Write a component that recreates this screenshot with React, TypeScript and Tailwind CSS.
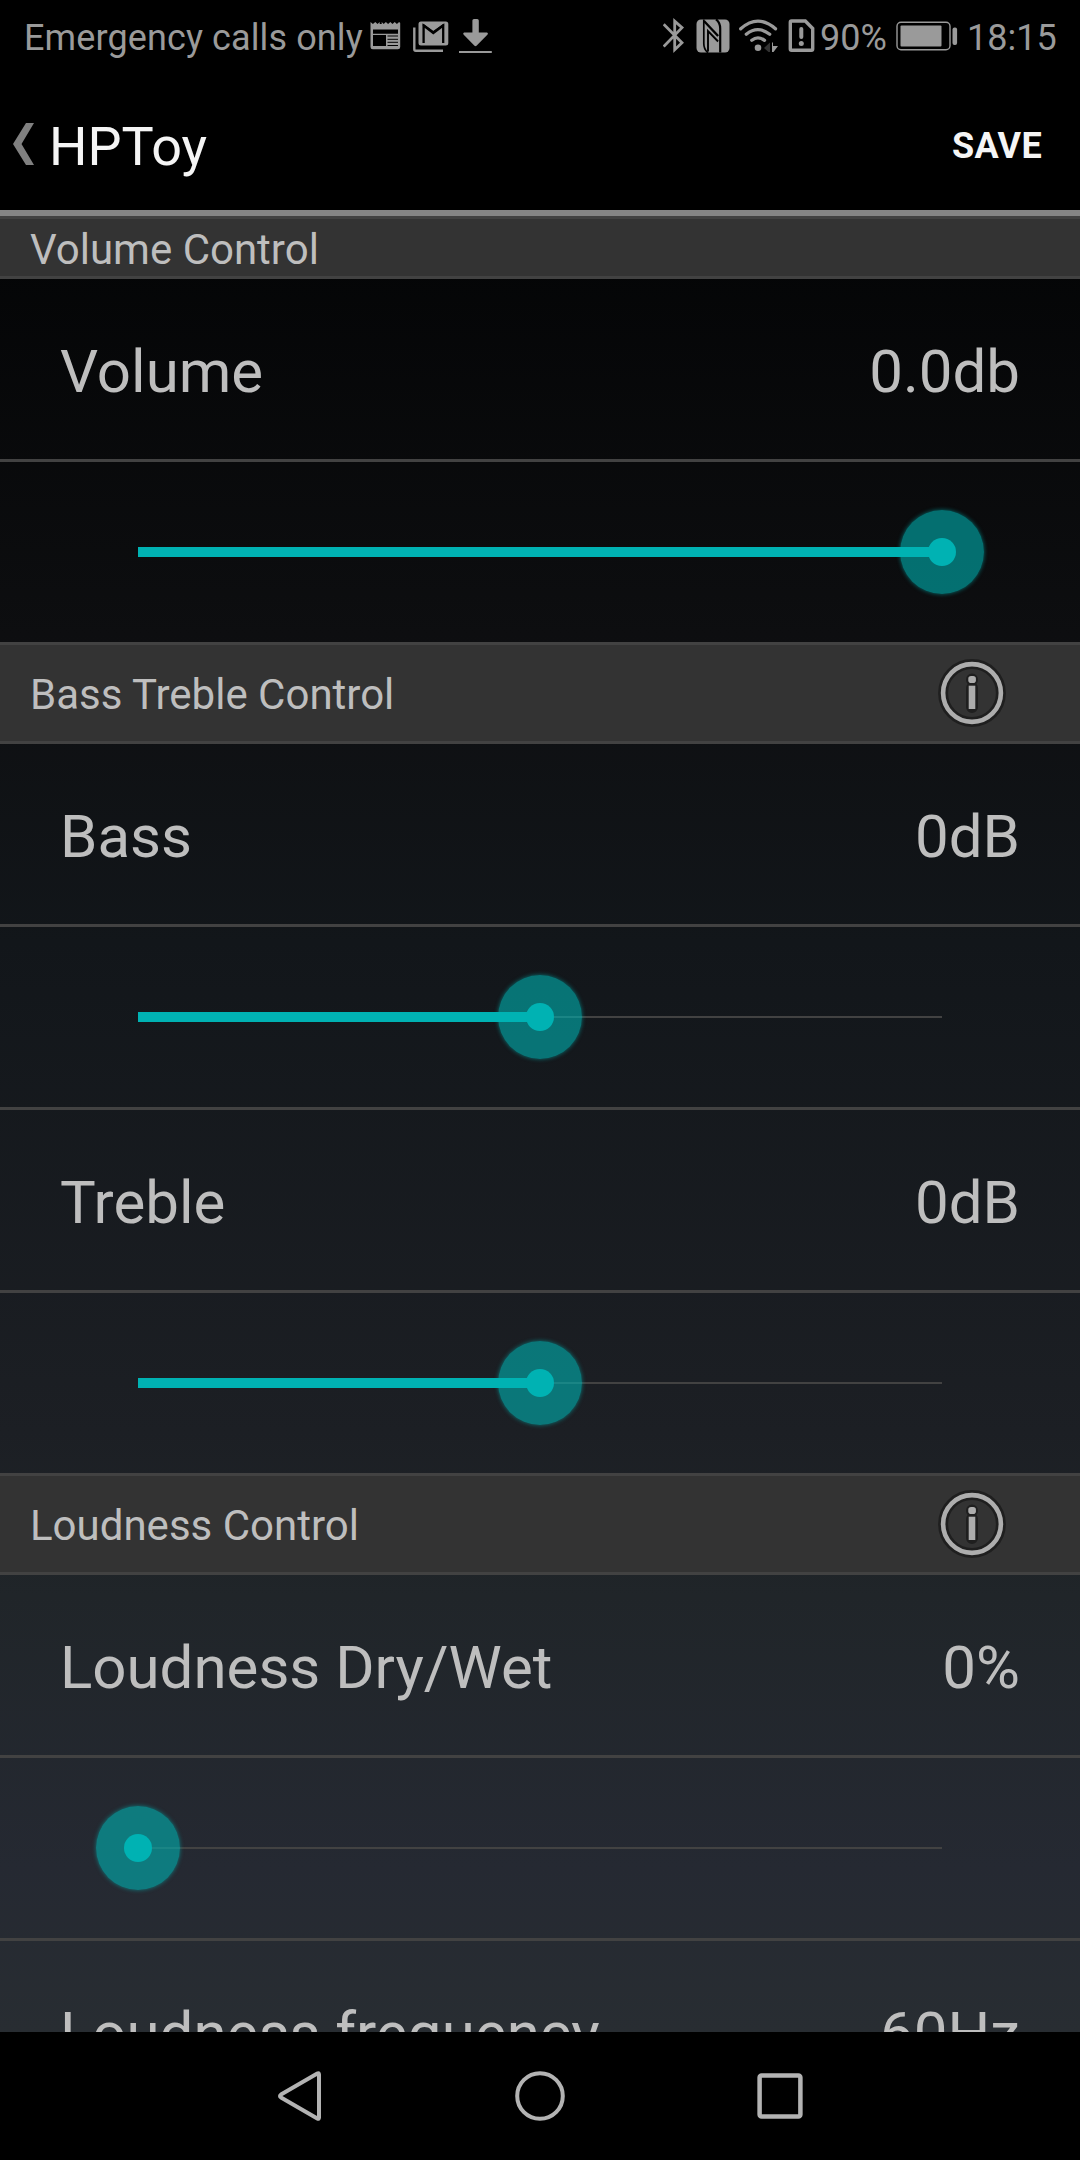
import React from "react";

const GRAY = "#9a9a9a";

function NewsIcon() {
  return (
    <svg className="h-[28px] w-[31px]" viewBox="370 23 31 28" fill={GRAY}>
      <path d="M370.5 23l2.4 2 2.4-2 2.2 2 2.2-2v2h2v-2l2 2 2.2-2 2.2 2 2.2-2 2.2 2 2.2-2 2.2 2 2.2-2 1.1 1V48a2.3 2.3 0 0 1-2.3 2.3H372.800a2.300 2.300 0 0 1-2.300-2.300z" />
      <path d="M373 30.500h25v4.200h-25zM373 36h13v11h-13z" fill="#000" />
      <path d="M387.500 37h10.500M387.500 40.300h10.500M387.500 43.300h10.500M387.500 46.500h10.500" stroke="#000" strokeWidth="1" />
    </svg>
  );
}

function MailIcon() {
  return (
    <svg className="h-[31px] w-[36px]" viewBox="413 21 36 31" fill="none">
      <path d="M414.300 27.500V49.300q0 1.400 1.400 1.400H443" stroke={GRAY} strokeWidth="2.400" />
      <rect x="418.500" y="21.500" width="29.800" height="24" rx="2.500" fill={GRAY} />
      <path d="M423.600 43V25.500L433.300 33 443.200 25.500V43" stroke="#000" strokeWidth="2.300" />
      <path d="M423 24.500L433.300 32 443.800 24.500" stroke="#000" strokeWidth="1.600" />
    </svg>
  );
}

function DownloadIcon() {
  return (
    <svg className="h-[34px] w-[33px]" viewBox="459 19 33 34" fill={GRAY}>
      <path d="M474 19h3.200q1.600 0 1.600 1.600V32.500h8.200q1.600.6.600 1.900L476.500 45.800q-1 .9-2 0L463.500 34.400q-.9-1.400.6-1.900h8.300V20.600q0-1.600 1.600-1.600z" />
      <rect x="459" y="51" width="32.800" height="2" />
    </svg>
  );
}

function BluetoothIcon() {
  return (
    <svg className="h-[36px] w-[22px]" viewBox="663 19 22 36" fill="none" stroke={GRAY} strokeWidth="2.800">
      <path d="M663.700 25.300L682 43.800 674.700 50.800V22.200L682 28.600 663.700 47.600" />
    </svg>
  );
}

function NfcIcon() {
  return (
    <svg className="h-[34px] w-[34px]" viewBox="695.500 19.500 34 34">
      <rect x="696" y="20" width="33" height="33" rx="4.500" fill={GRAY} />
      <g fill="none" stroke="#000" strokeWidth="1.700">
        <path d="M703.300 20V44Q703.300 50 707.500 53.200" />
        <path d="M703.500 21.500L717.600 36.500" strokeWidth="2.400" />
        <path d="M707.500 52V31.500L717.600 42" strokeWidth="1.900" />
        <path d="M715.500 19.800Q719.700 23 719.700 29V53" strokeWidth="2.200" />
      </g>
    </svg>
  );
}

function WifiIcon() {
  return (
    <svg className="h-[34px] w-[40px]" viewBox="739 19 40 34" fill="none" stroke={GRAY} strokeWidth="3.300" strokeLinecap="round">
      <path d="M740.700 28.800Q757.800 13.500 775.500 28.800M746.300 34.200Q757.800 25 769.700 34.200M751.800 40.300Q757.800 35.500 764.500 40.300" />
      <circle cx="758" cy="47.800" r="3.300" fill={GRAY} stroke="none" />
      <path d="M770 42.500V52h-1.500L764 48z" fill="#333" stroke="none" />
      <path d="M773 42.500v3.500h5L773.500 52H772V42.500z" fill={GRAY} stroke="none" />
    </svg>
  );
}

function SimIcon() {
  return (
    <svg className="h-[34px] w-[27px]" viewBox="787.500 19 27 34" fill="none" stroke={GRAY}>
      <path d="M791 21H804.800L812.200 28.500V49q0 1.200-1.200 1.200H791q-1.200 0-1.200-1.200V22.200q0-1.200 1.200-1.200z" strokeWidth="3.400" />
      <path d="M800.800 29V37" strokeWidth="4" strokeLinecap="round" />
      <circle cx="800.800" cy="43.400" r="2.500" fill={GRAY} stroke="none" />
    </svg>
  );
}

function BatteryIcon() {
  return (
    <svg className="h-[30px] w-[62px]" viewBox="895.500 21.500 62 30" fill={GRAY}>
      <rect x="896.500" y="22.700" width="53" height="27.600" rx="4" fill="none" stroke={GRAY} strokeWidth="1.400" />
      <rect x="900" y="26" width="41" height="21" rx="1" />
      <rect x="952" y="28" width="4.600" height="17.500" rx="2" />
    </svg>
  );
}

function InfoIcon() {
  return (
    <svg className="h-[72px] w-[72px]" viewBox="-36 -36 72 72" fill="none">
      <circle r="28.900" stroke="#1f1f1f" strokeWidth="10" />
      <path d="M0-13.500V-13M0-5V14" stroke="#1f1f1f" strokeWidth="12" strokeLinecap="round" />
      <circle r="28.900" stroke="#adadad" strokeWidth="4.600" />
      <rect x="-3.700" y="-17" width="7.600" height="7" rx="2.800" fill="#adadad" />
      <rect x="-3.300" y="-7.300" width="6.600" height="23.300" fill="#adadad" />
    </svg>
  );
}

function SectionHeader({ title, info }: { title: string; info?: boolean }) {
  return (
    <div
      className={
        "flex shrink-0 items-center justify-between border-y-[3px] border-[#424242] bg-[#333333] pl-[30px] pr-[72px] " +
        (info ? "h-[102px]" : "h-[63px]")
      }
    >
      <span className="pt-[4px] text-[42px] leading-[50px]">{title}</span>
      {info && <InfoIcon />}
    </div>
  );
}

function ValueRow({ label, value }: { label: string; value: string }) {
  return (
    <div className="flex h-[183px] shrink-0 items-center justify-between border-b-[3px] border-[#424242] px-[60px] pt-[5px] text-[60px] leading-[70px]">
      <span>{label}</span>
      <span>{value}</span>
    </div>
  );
}

function SliderRow({ percent, last }: { percent: number; last?: boolean }) {
  return (
    <div
      className={
        "flex shrink-0 items-center px-[138px] " +
        (last ? "h-[180px]" : "h-[183px] border-b-[3px] border-[#424242]")
      }
    >
      <div className="relative flex h-[84px] w-full items-center">
        <div className="h-[2px] w-full bg-[#424242]" />
        <div
          className="absolute top-0 h-[84px] w-[84px] -translate-x-1/2 rounded-full bg-[#00b2b3]/60 shadow-[0_0_4px_rgba(0,178,179,0.600)]"
          style={{ left: `${percent}%` }}
        />
        <div className="absolute left-0 top-[37px] h-[10px] bg-[#00b2b3]" style={{ width: `${percent}%` }} />
        <div
          className="absolute top-[28px] h-[28px] w-[28px] -translate-x-1/2 rounded-full bg-[#00b2b3]"
          style={{ left: `${percent}%` }}
        />
      </div>
    </div>
  );
}

function StatusBar() {
  return (
    <div className="flex h-[72px] shrink-0 items-center justify-between pl-[24px] pr-[24px] text-[36px] leading-[42px] text-[#9a9a9a]">
      <div className="flex items-center">
        <span className="w-[346px] whitespace-nowrap pt-[3px] tracking-[0.11px]">Emergency calls only</span>
        <NewsIcon />
        <span className="w-[12px]" />
        <MailIcon />
        <span className="w-[10px]" />
        <DownloadIcon />
      </div>
      <div className="flex items-center">
        <BluetoothIcon />
        <span className="w-[10.5px]" />
        <NfcIcon />
        <span className="w-[9.5px]" />
        <WifiIcon />
        <span className="w-[8.5px]" />
        <SimIcon />
        <span className="w-[81px] whitespace-nowrap pl-[5.5px] pt-[3px]">90%</span>
        <BatteryIcon />
        <span className="w-[98.5px] whitespace-nowrap pl-[9.5px] pt-[3px]">18:15</span>
      </div>
    </div>
  );
}

function ActionBar() {
  return (
    <div className="flex h-[144px] shrink-0 items-center border-b-[6px] border-[#858585] pl-[13px] pr-[38px] text-[#f5f5f5]">
      <svg className="mt-[6px] h-[42px] w-[21px]" viewBox="13 123 21 42">
        <path d="M26 123H34L21.500 144 34 165H26L13 144z" fill="#808080" />
      </svg>
      <span className="ml-[15px] mt-[12px] text-[54px] leading-[64px]">HPToy</span>
      <span className="ml-auto mt-[10px] text-[36px] font-bold leading-[42px] tracking-[0.3px]">SAVE</span>
    </div>
  );
}

function NavBar() {
  return (
    <div className="flex h-[128px] shrink-0 items-center justify-center gap-[180px] bg-black">
      <svg className="h-[60px] w-[60px]" viewBox="-30 -30 60 60" fill="none" stroke="#b3b3b3" strokeWidth="4" strokeLinejoin="round">
        <path d="M17.300-22.500Q19-23.500 19-21.500V21.500Q19 23.500 17.300 22.500L-19 1.500Q-21 0-19-1.500z" />
      </svg>
      <svg className="h-[60px] w-[60px]" viewBox="-30 -30 60 60" fill="none" stroke="#b3b3b3" strokeWidth="4">
        <circle r="22.800" />
      </svg>
      <svg className="h-[60px] w-[60px]" viewBox="-30 -30 60 60" fill="none" stroke="#b3b3b3" strokeWidth="4.500">
        <rect x="-20.400" y="-20.400" width="40.800" height="40.800" rx="2" />
      </svg>
    </div>
  );
}

export default function App() {
  return (
    <div className="flex h-[2160px] w-[1080px] flex-col overflow-hidden bg-black font-['Roboto',sans-serif] text-[#bebebe]">
      <StatusBar />
      <ActionBar />
      <div className="flex min-h-0 flex-1 flex-col overflow-hidden bg-[linear-gradient(to_bottom,#030405_0%,#0d0e10_23%,#12161a_40%,#1c1f24_67%,#202529_76%,#252932_91%,#282d32_100%)]">
        <SectionHeader title="Volume Control" />
        <ValueRow label="Volume" value="0.0db" />
        <SliderRow percent={100} last />
        <SectionHeader title="Bass Treble Control" info />
        <ValueRow label="Bass" value="0dB" />
        <SliderRow percent={50} />
        <ValueRow label="Treble" value="0dB" />
        <SliderRow percent={50} last />
        <SectionHeader title="Loudness Control" info />
        <ValueRow label="Loudness Dry/Wet" value="0%" />
        <SliderRow percent={0} />
        <ValueRow label="Loudness frequency" value="60Hz" />
      </div>
      <NavBar />
    </div>
  );
}
